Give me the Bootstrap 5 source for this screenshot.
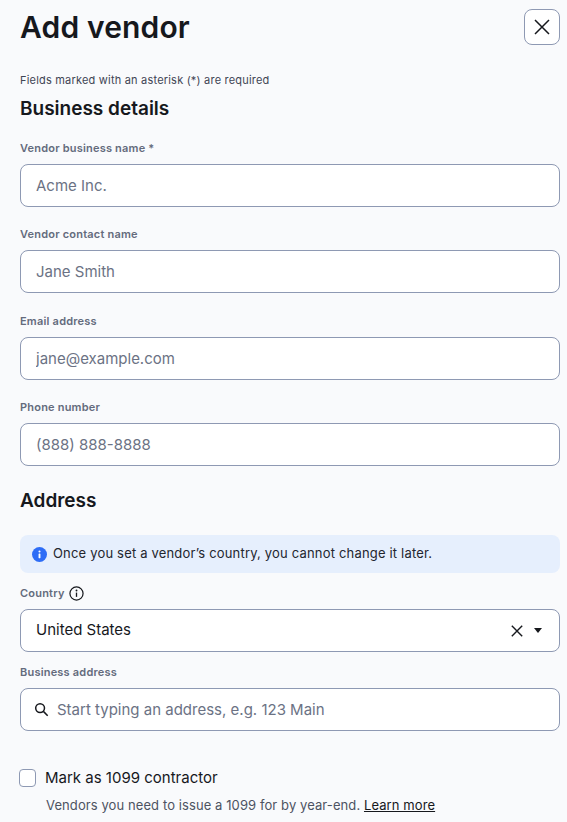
<!DOCTYPE html>
<html lang="en">
<head>
    <meta charset="UTF-8">
    <meta name="viewport" content="width=device-width, initial-scale=1.0">
    <title>Add vendor</title>
    <link href="https://cdn.jsdelivr.net/npm/bootstrap@5.3.0/dist/css/bootstrap.min.css" rel="stylesheet">
    <style>
        body {
            background-color: #f9fafc;
            color: #16181d;
            font-family: "Inter", "Liberation Sans", sans-serif;
            overflow: hidden;
        }
        .vendor-form {
            padding: 9px 7px 0 20px;
        }
        .page-title {
            font-size: 30px;
            font-weight: 600;
            letter-spacing: .15px;
            line-height: 36px;
            margin: 0;
        }
        .close-box {
            width: 36px;
            height: 36px;
            padding: 0;
            background: #fff;
            border: 1px solid #8e99b3;
            border-radius: 8px;
            display: flex;
            align-items: center;
            justify-content: center;
        }
        .required-hint {
            font-size: 11px;
            letter-spacing: .2px;
            line-height: 16px;
            color: #3f4554;
            margin: 27px 0 0;
        }
        .section-title {
            font-size: 19px;
            font-weight: 600;
            line-height: 24px;
            margin: 0;
        }
        .details-title {
            margin: 9px 0 19px;
        }
        .address-title {
            margin: 23px 0 22px;
        }
        .field-label {
            display: flex;
            align-items: center;
            gap: 4px;
            font-size: 11px;
            font-weight: 600;
            letter-spacing: .2px;
            line-height: 16px;
            color: #646b7c;
            margin-bottom: 8px;
        }
        .field-input.form-control {
            height: 43px;
            font-size: 15px;
            color: #16181d;
            padding: 0 15px;
            border: 1px solid #8e99b3;
            border-radius: 8px;
        }
        .field-input.form-control::placeholder {
            color: #6b7284;
            opacity: 1;
        }
        .field-gap {
            margin-bottom: 19.4px;
        }
        .note-box {
            display: flex;
            align-items: center;
            gap: 6px;
            height: 38px;
            padding: 0 12px;
            background: #e6effd;
            border-radius: 8px;
            font-size: 13px;
            letter-spacing: .18px;
            color: #23262e;
        }
        .country-field {
            margin: 12px 0;
        }
        .country-box {
            height: 43px;
            background: #fff;
            border: 1px solid #8e99b3;
            border-radius: 8px;
            padding: 0 17px 0 15px;
            font-size: 15px;
        }
        .search-wrap {
            position: relative;
        }
        .search-wrap svg {
            position: absolute;
            left: 14px;
            top: 14px;
        }
        .search-wrap .field-input.form-control {
            padding-left: 36px;
        }
        .caret-down {
            width: 0;
            height: 0;
            margin-left: 3px;
            border-left: 4px solid transparent;
            border-right: 4px solid transparent;
            border-top: 5px solid #16181d;
        }
        .check-row {
            margin-top: 37px;
        }
        .check-box.form-check-input {
            width: 17px;
            height: 18px;
            margin: 0 1px 0 -1px;
            border: 1px solid #8e99b3;
            border-radius: 4px;
            background-color: #fff;
        }
        .check-text {
            font-size: 15px;
            line-height: 20px;
        }
        .check-help {
            font-size: 13px;
            letter-spacing: .09px;
            line-height: 18px;
            color: #4d5362;
            margin: 8px 0 0 26px;
        }
        .check-help a {
            color: #16181d;
        }
    </style>
</head>
<body>
    <form class="vendor-form">
        <div class="d-flex justify-content-between align-items-start">
            <h1 class="page-title">Add vendor</h1>
            <button type="button" class="close-box" aria-label="Close">
                <svg width="16" height="16" viewBox="0 0 16 16" fill="none" stroke="#16181d" stroke-width="1.5"><path d="M1 1l14 14M15 1L1 15"/></svg>
            </button>
        </div>

        <p class="required-hint">Fields marked with an asterisk (*) are required</p>
        <h2 class="section-title details-title">Business details</h2>

        <div class="field-gap">
            <label class="field-label">Vendor business name&nbsp;*</label>
            <input class="form-control field-input" placeholder="Acme Inc.">
        </div>
        <div class="field-gap">
            <label class="field-label">Vendor contact name</label>
            <input class="form-control field-input" placeholder="Jane Smith">
        </div>
        <div class="field-gap">
            <label class="field-label">Email address</label>
            <input class="form-control field-input" placeholder="jane@example.com">
        </div>
        <div class="field-gap">
            <label class="field-label">Phone number</label>
            <input class="form-control field-input" placeholder="(888) 888-8888">
        </div>

        <h2 class="section-title address-title">Address</h2>

        <div class="note-box">
            <svg width="15" height="15" viewBox="0 0 16 16"><circle cx="8" cy="8" r="8" fill="#2e6df6"/><rect x="7" y="7" width="2" height="5" rx=".5" fill="#fff"/><circle cx="8" cy="4.8" r="1.1" fill="#fff"/></svg>
            <span>Once you set a vendor’s country, you cannot change it later.</span>
        </div>

        <div class="country-field">
            <label class="field-label">Country
                <svg width="15" height="15" viewBox="0 0 16 16" fill="none"><circle cx="8" cy="8" r="7" stroke="#16181d" stroke-width="1.3"/><rect x="7.3" y="7" width="1.4" height="4.6" fill="#16181d"/><circle cx="8" cy="4.8" r="1" fill="#16181d"/></svg>
            </label>
            <div class="country-box d-flex align-items-center justify-content-between">
                <span>United States</span>
                <span class="d-flex align-items-center gap-2">
                    <svg width="12" height="12" viewBox="0 0 12 12" fill="none" stroke="#16181d" stroke-width="1.4"><path d="M.8.8l10.4 10.4M11.2.8L.8 11.2"/></svg>
                    <span class="caret-down"></span>
                </span>
            </div>
        </div>

        <div>
            <label class="field-label">Business address</label>
            <div class="search-wrap">
                <svg width="15" height="15" viewBox="0 0 16 16" fill="none" stroke="#16181d" stroke-width="1.6"><circle cx="6.5" cy="6.5" r="4.7"/><path d="M10 10l4.6 4.6"/></svg>
                <input class="form-control field-input" placeholder="Start typing an address, e.g. 123 Main">
            </div>
        </div>

        <div class="check-row d-flex align-items-center gap-2">
            <input type="checkbox" class="form-check-input check-box" id="contractor">
            <label class="check-text" for="contractor">Mark as 1099 contractor</label>
        </div>
        <p class="check-help">Vendors you need to issue a 1099 for by year-end. <a href="#">Learn more</a></p>
    </form>

    <script src="https://cdn.jsdelivr.net/npm/bootstrap@5.3.0/dist/js/bootstrap.bundle.min.js"></script>
</body>
</html>
